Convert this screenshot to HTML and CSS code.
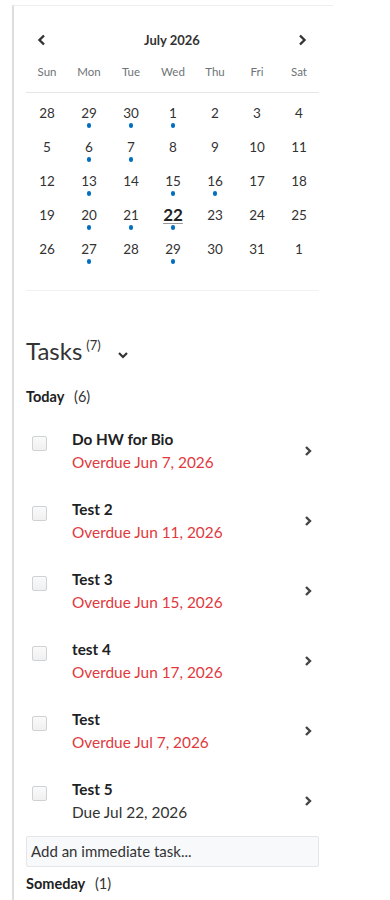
FILE: index.html
```html
<!DOCTYPE html>
<html lang="en">
<head>
    <meta charset="UTF-8">
    <meta name="viewport" content="width=device-width, initial-scale=1.0">
    <title>Calendar and tasks</title>
    <link rel="stylesheet" href="styles.css">
</head>
<body>
    <div class="panel">
        <!-- Календар -->
        <div class="calendar">
            <div class="cal-header">
                <span class="cal-nav">
                    <svg width="10" height="12" viewBox="0 0 10 12"><polyline points="7,1.5 2.5,6 7,10.5" fill="none" stroke="#333" stroke-width="2.4"/></svg>
                </span>
                <span class="cal-title">July 2026</span>
                <span class="cal-nav">
                    <svg width="10" height="12" viewBox="0 0 10 12"><polyline points="3,1.5 7.5,6 3,10.5" fill="none" stroke="#333" stroke-width="2.4"/></svg>
                </span>
            </div>
            <div class="weekdays">
                <span>Sun</span><span>Mon</span><span>Tue</span><span>Wed</span><span>Thu</span><span>Fri</span><span>Sat</span>
            </div>
            <div id="days" class="days"></div>
        </div>

        <!-- Завдання -->
        <div class="tasks-head">
            <span class="tasks-title">Tasks</span><span class="tasks-count">(7)</span>
            <svg class="tasks-toggle" width="12" height="8" viewBox="0 0 12 8"><polyline points="2,2 6,6 10,2" fill="none" stroke="#333" stroke-width="2.2"/></svg>
        </div>
        <div class="group-title"><b>Today</b> <span>(6)</span></div>
        <div id="task-list"></div>
        <div class="add-task">Add an immediate task...</div>
        <div class="group-title"><b>Someday</b> <span>(1)</span></div>
    </div>

    <script>
        const days = [
            [28, 1], [29, 1, 1], [30, 1, 1], [1, 0, 1], [2], [3], [4],
            [5], [6, 0, 1], [7, 0, 1], [8], [9], [10], [11],
            [12], [13, 0, 1], [14], [15, 0, 1], [16, 0, 1], [17], [18],
            [19], [20, 0, 1], [21, 0, 1], [22, 0, 1, 1], [23], [24], [25],
            [26], [27, 0, 1], [28], [29, 0, 1], [30], [31], [1, 1]
        ];

        const tasks = [
            { name: "Do HW for Bio", due: "Overdue Jun 7, 2026", overdue: true },
            { name: "Test 2", due: "Overdue Jun 11, 2026", overdue: true },
            { name: "Test 3", due: "Overdue Jun 15, 2026", overdue: true },
            { name: "test 4", due: "Overdue Jun 17, 2026", overdue: true },
            { name: "Test", due: "Overdue Jul 7, 2026", overdue: true },
            { name: "Test 5", due: "Due Jul 22, 2026", overdue: false }
        ];

        const daysBox = document.getElementById("days");
        days.forEach(d => {
            const cell = document.createElement("div");
            cell.className = "day";
            const num = document.createElement("span");
            num.className = d[3] ? "num today" : "num";
            num.textContent = d[0];
            cell.appendChild(num);
            const dot = document.createElement("span");
            dot.className = d[2] ? "dot" : "dot empty";
            cell.appendChild(dot);
            daysBox.appendChild(cell);
        });

        const list = document.getElementById("task-list");
        tasks.forEach(t => {
            const row = document.createElement("div");
            row.className = "task";
            row.innerHTML =
                '<span class="check"></span>' +
                '<div class="task-body"><div class="task-name"></div><div class="task-due"></div></div>' +
                '<svg class="task-arrow" width="10" height="12" viewBox="0 0 10 12"><polyline points="3,2 7,6 3,10" fill="none" stroke="#444" stroke-width="2.4"/></svg>';
            row.querySelector(".task-name").textContent = t.name;
            const due = row.querySelector(".task-due");
            due.textContent = t.due;
            if (t.overdue) due.classList.add("overdue");
            list.appendChild(row);
        });
    </script>
</body>
</html>
```

FILE: styles.css
```css
body {
    font-family: Lato, "Open Sans", Arial, sans-serif;
    margin: 0;
    background-color: #fff;
    color: #202122;
}
.panel {
    margin: 5px 0 0 12px;
    width: 293px;
    padding: 24px 14px 0 12px;
    border-left: 2px solid #ddd;
    border-top: 1px solid #eee;
    min-height: 900px;
}

/* Календар */
.calendar {
    border-bottom: 1px solid #f1f1f1;
    padding-bottom: 16px;
}
.cal-header {
    display: flex;
    justify-content: space-between;
    align-items: center;
    height: 20px;
    padding: 0 12px 0 11px;
}
.cal-nav {
    display: flex;
    align-items: center;
}
.cal-title {
    font-size: 13px;
    font-weight: bold;
    color: #333;
}
.weekdays {
    display: grid;
    grid-template-columns: repeat(7, 42px);
    margin-top: 14px;
    padding-bottom: 12px;
    border-bottom: 1px solid #e6e6e6;
    font-size: 11.5px;
    line-height: 16px;
    color: #6e7376;
    text-align: center;
}
.days {
    display: grid;
    grid-template-columns: repeat(7, 42px);
    padding-top: 11px;
}
.day {
    height: 34px;
    display: flex;
    flex-direction: column;
    align-items: center;
}
.num {
    font-size: 13.5px;
    line-height: 18px;
    color: #333;
}
.num.today {
    font-size: 17px;
    font-weight: bold;
    color: #202122;
    text-decoration: underline;
    text-decoration-color: #999;
    text-decoration-thickness: 1px;
    text-underline-offset: 2px;
}
.dot {
    width: 4.5px;
    height: 4.5px;
    margin-top: 1px;
    border-radius: 50%;
    background-color: #006fbf;
}
.dot.empty {
    background: none;
}

/* Завдання */
.tasks-head {
    display: flex;
    align-items: flex-start;
    margin-top: 46px;
    height: 28px;
    color: #333;
}
.tasks-title {
    font-size: 24px;
    line-height: 28px;
}
.tasks-count {
    font-size: 13px;
    line-height: 16px;
    margin-left: 4px;
}
.tasks-toggle {
    margin: 14px 0 0 16px;
}
.group-title {
    margin-top: 22px;
    font-size: 14.5px;
    line-height: 20px;
    color: #202122;
}
.group-title span {
    margin-left: 6px;
    color: #333;
}
#task-list {
    margin-top: 9px;
}
.task {
    display: flex;
    align-items: flex-start;
    padding: 13px 0;
    height: 44px;
}
.check {
    width: 13px;
    height: 13px;
    margin: 7px 0 0 6px;
    border: 1px solid #cfd2d4;
    border-radius: 2px;
    background: linear-gradient(#fafafa, #f0f0f0);
}
.task-body {
    flex: 1;
    margin-left: 25px;
}
.task-name {
    font-size: 15.3px;
    font-weight: bold;
    line-height: 20px;
    color: #202122;
}
.task-due {
    margin-top: 3px;
    font-size: 15.4px;
    line-height: 20px;
    color: #333;
}
.task-due.overdue {
    color: #e0393e;
}
.task-arrow {
    align-self: center;
    margin-right: 6px;
}
.add-task {
    height: 29px;
    padding-left: 4px;
    border: 1px solid #e3e7ea;
    border-radius: 2px;
    background-color: #f7f9fb;
    font-size: 15px;
    line-height: 29px;
    color: #333;
}
.add-task + .group-title {
    margin-top: 7px;
}
```
